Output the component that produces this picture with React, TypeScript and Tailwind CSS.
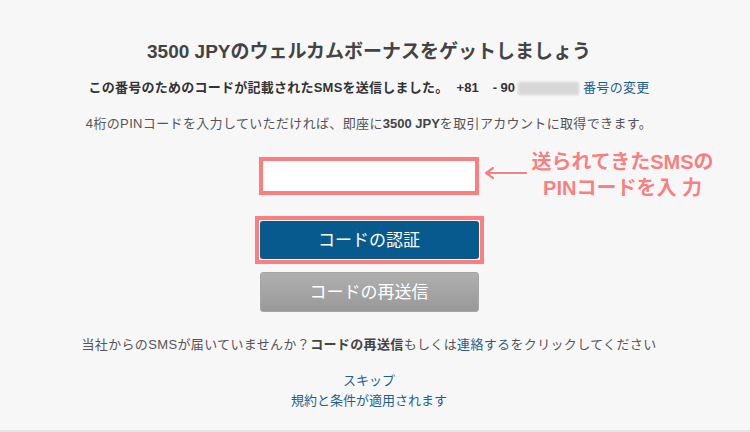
import React from "react";

const font = "font-['Liberation_Sans','Noto_Sans_CJK_JP',sans-serif]";

export default function App() {
  return (
    <div className={`relative w-[750px] h-[432px] bg-[#f7f7f7] border-b-2 border-[#e6e6e6] ${font} pr-[12px]`}>
      <div className="flex flex-col items-center">
        <h1 className="mt-[40px] h-[24px] leading-[24px] text-[19px] font-bold text-[#444] whitespace-nowrap">
          3500 JPYのウェルカムボーナスをゲットしましょう
        </h1>
        <div className="mt-[14px] h-[20px] leading-[20px] text-[13px] flex items-center whitespace-nowrap">
          <span className="font-bold text-[#333] tracking-[0.25px]">この番号のためのコードが記載されたSMSを送信しました。</span>
          <span className="font-bold text-[#333] ml-[8px]">+81</span>
          <span className="font-bold text-[#333] ml-[14px]">- 90</span>
          <span className="ml-[3px] w-[61px] h-[13px] bg-[#d8d8d8] blur-[1px]" />
          <span className="ml-[4px] text-[#1d5f8f] tracking-[0.3px]">番号の変更</span>
        </div>
        <p className="mt-[16px] h-[20px] leading-[20px] text-[13px] text-[#555] whitespace-nowrap tracking-[0.35px]">
          4桁のPINコードを入力していただければ、即座に<span className="font-bold text-[#444] tracking-normal">3500 JPY</span>を取引アカウントに取得できます。
        </p>
        <div className="mt-[23px] w-[220px] h-[38px] bg-white border-4 border-[#fc7e7f]" />
        <div className="mt-[21px] w-[229px] h-[48px] border-4 border-[#fc7e7f] p-px">
          <button className="w-full h-full rounded-[3px] bg-[#075a8d] text-white text-[17px] leading-none">
            コードの認証
          </button>
        </div>
        <button className="mt-[8px] w-[219px] h-[40px] rounded-[3px] bg-linear-to-b from-[#b0b0b0] to-[#999999] border border-[#a5a5a5] text-white text-[17px] leading-none">
          コードの再送信
        </button>
        <p className="mt-[23px] h-[20px] leading-[20px] text-[13px] text-[#555] whitespace-nowrap tracking-[0.35px]">
          当社からのSMSが届いていませんか？<span className="font-bold text-[#444]">コードの再送信</span>もしくは<span className="text-[#1d5f8f]">連絡する</span>をクリックしてください
        </p>
        <a className="mt-[16px] h-[20px] leading-[20px] text-[13px] text-[#1d5f8f]">スキップ</a>
        <a className="h-[20px] leading-[20px] text-[13px] text-[#1d5f8f]">規約と条件が適用されます</a>
      </div>

      <svg className="absolute left-[482px] top-[165px]" width="48" height="16" viewBox="0 0 48 16">
        <g fill="none" stroke="#ffffff" strokeWidth="5" strokeLinecap="round" strokeLinejoin="round">
          <path d="M4 8 H44" />
          <path d="M11 3 L4 8 L11 13" />
        </g>
        <g fill="none" stroke="#fc7e7f" strokeWidth="2.2" strokeLinecap="round" strokeLinejoin="round">
          <path d="M4 8 H44" />
          <path d="M11 3 L4 8 L11 13" />
        </g>
      </svg>
      <div className="absolute left-[520px] top-[149px] w-[205px] text-center text-[20px] leading-[26px] font-bold text-[#fc7e7f] [text-shadow:0_0_2px_#fff,0_0_2px_#fff,0_0_1px_#fff] whitespace-nowrap">
        <div>送られてきたSMSの</div>
        <div>PINコードを入 力</div>
      </div>
    </div>
  );
}
